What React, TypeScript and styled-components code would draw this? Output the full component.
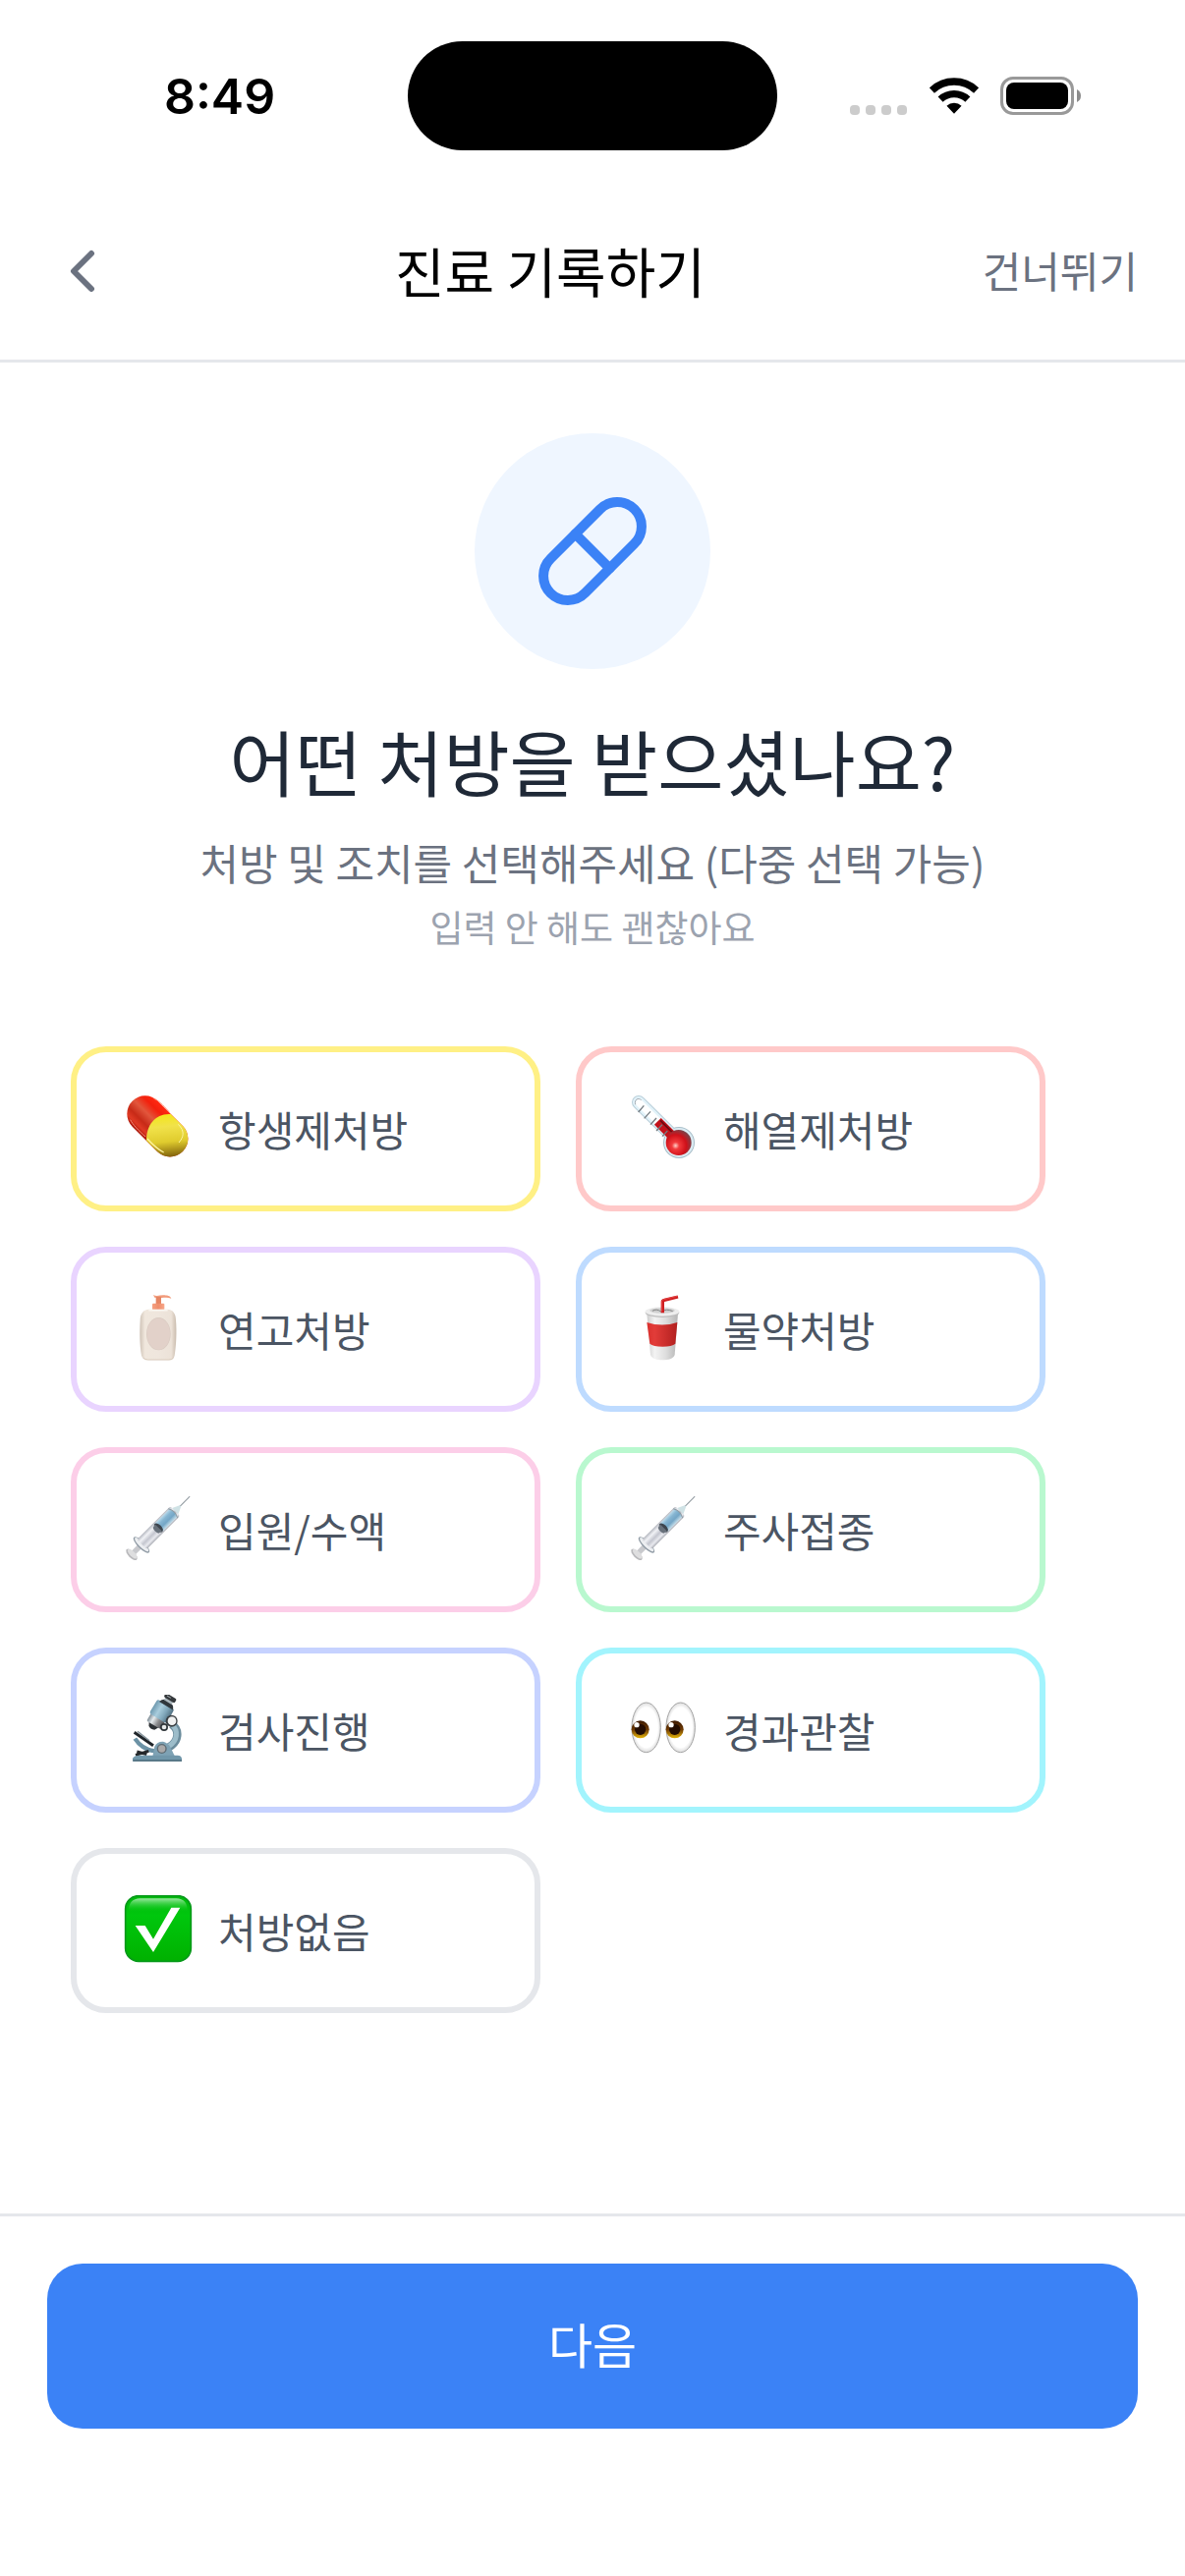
import React, { useState } from "react";
import styled, { createGlobalStyle } from "styled-components";
import { ChevronLeft, Pill } from "lucide-react";

const GlobalStyle = createGlobalStyle`
  *, *::before, *::after { box-sizing: border-box; }
  body {
    margin: 0;
    background: #ffffff;
    font-family: "Noto Sans CJK KR", "Noto Sans", sans-serif;
  }
  button { font-family: inherit; cursor: pointer; }
`;

const Screen = styled.div`
  min-height: 100vh;
  display: flex;
  flex-direction: column;
`;

const StatusBar = styled.div`
  display: flex;
  align-items: center;
  padding: 42px 32px 33px;
`;

const StatusSide = styled.div`
  flex: 1;
  display: flex;
  align-items: center;
  justify-content: center;
`;

const Clock = styled.time`
  font-family: Inter, sans-serif;
  font-size: 50px;
  font-weight: 600;
  line-height: 60px;
`;

const Island = styled.div`
  width: 376px;
  height: 111px;
  border-radius: 56px;
  background: #000000;
`;

const SignalDots = styled.svg`
  width: 58px;
  height: 38px;
  margin-right: 23px;
`;

const Wifi = styled.svg`
  width: 50px;
  height: 37px;
  margin-right: 22px;
`;

const Battery = styled.svg`
  width: 82px;
  height: 39px;
`;

const Header = styled.header`
  display: flex;
  align-items: center;
  justify-content: space-between;
  padding: 54px 48px;
  border-bottom: 3px solid #e5e7eb;
`;

const BackButton = styled.button`
  display: flex;
  padding: 0;
  border: 0;
  background: none;
  color: #6b7280;
`;

const SkipButton = styled.button`
  padding: 0 0 4px;
  border: 0;
  background: none;
  color: #6b7280;
  font-size: 43px;
  line-height: 60px;
`;

const Title = styled.h1`
  margin: 0;
  padding-bottom: 4px;
  font-size: 55px;
  font-weight: 400;
  line-height: 68px;
  color: #000000;
`;

const Main = styled.main`
  flex: 1;
  padding: 72px;
`;

const Intro = styled.section`
  display: flex;
  flex-direction: column;
  align-items: center;
  text-align: center;
  margin-bottom: 98px;
`;

const IconCircle = styled.div`
  width: 240px;
  height: 240px;
  border-radius: 50%;
  background: #eff6ff;
  color: #3b82f6;
  display: flex;
  align-items: center;
  justify-content: center;
  margin-bottom: 44px;
`;

const Question = styled.h2`
  margin: 0 0 26px;
  font-size: 73px;
  font-weight: 400;
  line-height: 96px;
  color: #1f2937;
`;

const Guide = styled.p`
  margin: 0 0 12px;
  font-size: 43px;
  line-height: 60px;
  color: #6b7280;
`;

const Hint = styled.p`
  margin: 0;
  font-size: 37px;
  line-height: 48px;
  color: #9ca3af;
`;

const Options = styled.div`
  display: flex;
  flex-wrap: wrap;
  gap: 36px;
`;

const OptionCard = styled.button<{ $border: string; $selected: boolean }>`
  width: 45%;
  height: 168px;
  display: flex;
  align-items: center;
  gap: 24px;
  padding: 0 48px;
  border: 6px solid ${(p) => p.$border};
  border-radius: 36px;
  background: ${(p) => (p.$selected ? p.$border : "#ffffff")};
  color: #4b5563;
  font-size: 42px;
  line-height: 60px;
`;

const Emoji = styled.svg`
  width: 72px;
  height: 72px;
  flex: none;
`;

const Footer = styled.footer`
  padding: 48px 48px 150px;
  border-top: 3px solid #e5e7eb;
`;

const NextButton = styled.button`
  width: 100%;
  height: 168px;
  padding: 0 0 6px;
  border: 0;
  border-radius: 36px;
  background: #3b82f6;
  color: #ffffff;
  font-size: 49px;
  line-height: 72px;
`;

const PillArt = () => (
  <>
    <defs>
      <linearGradient id="pillRed" gradientUnits="userSpaceOnUse" x1="26" y1="101" x2="104" y2="23">
        <stop offset="0" stopColor="#a81206" />
        <stop offset="0.14" stopColor="#e03a24" />
        <stop offset="0.3" stopColor="#c72a17" />
        <stop offset="0.55" stopColor="#e2563c" />
        <stop offset="0.8" stopColor="#f3200c" />
        <stop offset="1" stopColor="#ff2a12" />
      </linearGradient>
      <linearGradient id="pillYellow" gradientUnits="userSpaceOnUse" x1="128" y1="60" x2="142" y2="194">
        <stop offset="0" stopColor="#f3e716" />
        <stop offset="0.3" stopColor="#f1e24a" />
        <stop offset="0.65" stopColor="#e0cc2e" />
        <stop offset="1" stopColor="#80610b" />
      </linearGradient>
    </defs>
    <path d="M104 23L180 99A55 55 0 0 1 102 177L26 101A55 55 0 0 1 104 23Z" fill="url(#pillRed)" />
    <path d="M143 63L180 99A55 55 0 0 1 102 177L69 144C68 98 96 60 143 63Z" fill="url(#pillYellow)" />
    <path d="M20 80C26 94 46 114 66 132" fill="none" stroke="#f58d7a" strokeWidth="3" />
    <path d="M72 138C88 156 106 172 122 180" fill="none" stroke="#fff3a0" strokeWidth="4" />
    <path d="M166 94C188 116 182 134 168 150" fill="none" stroke="#fbf4a0" strokeWidth="3" />
    <path d="M92 16C104 20 116 32 138 56" fill="none" stroke="#ff8a70" strokeWidth="3" />
  </>
);

const ThermometerArt = () => (
  <>
    <defs>
      <radialGradient id="thermoBall" cx="0.38" cy="0.62" r="0.65">
        <stop offset="0" stopColor="#ffd0c8" />
        <stop offset="0.22" stopColor="#f23a3c" />
        <stop offset="0.65" stopColor="#cf1019" />
        <stop offset="1" stopColor="#7c4148" />
      </radialGradient>
    </defs>
    <path d="M30 27L140 136" stroke="#b9cfda" strokeWidth="42" strokeLinecap="round" />
    <circle cx="153" cy="150" r="48" fill="#a9bfca" />
    <path d="M30 27L140 136" stroke="#e3f3fa" strokeWidth="36" strokeLinecap="round" />
    <circle cx="153" cy="150" r="45" fill="#dcecf3" />
    <path d="M32 29L130 126" stroke="#ffffff" strokeWidth="22" strokeLinecap="round" />
    <path d="M20 34C16 18 28 12 38 20" fill="none" stroke="#a7aeb4" strokeWidth="3" />
    <path d="M88 85L135 132" stroke="#c3121b" strokeWidth="29" />
    <path d="M96 82L138 124" stroke="#6f0b10" strokeWidth="6" />
    <circle cx="152" cy="150" r="39" fill="url(#thermoBall)" />
    <path d="M46 37L29 57M66 55L47 76M84 75L66 95M102 95L84 114M118 114L102 131" stroke="#747b80" strokeWidth="4" />
  </>
);

const LotionArt = () => (
  <>
    <defs>
      <linearGradient id="lotionBody" x1="0" x2="1" y1="0" y2="0">
        <stop offset="0" stopColor="#cfc3b7" />
        <stop offset="0.14" stopColor="#f0e7dd" />
        <stop offset="0.5" stopColor="#efe6dd" />
        <stop offset="0.86" stopColor="#ece2d8" />
        <stop offset="1" stopColor="#cabcae" />
      </linearGradient>
      <linearGradient id="lotionPump" x1="0" x2="1" y1="0" y2="0">
        <stop offset="0" stopColor="#f5a081" />
        <stop offset="0.5" stopColor="#ef8d6b" />
        <stop offset="1" stopColor="#f7a88b" />
      </linearGradient>
    </defs>
    <path d="M90 3C98 8 108 5 120 4C132 4 142 6 145 14C136 10 126 11 116 12L94 11Z" fill="#f29b7b" />
    <rect x="98" y="9" width="16" height="24" fill="#e58563" />
    <rect x="87" y="29" width="37" height="20" rx="3" fill="url(#lotionPump)" />
    <path d="M76 47H134C150 48 159 60 159 80C162 116 160 156 155 188Q152 202 139 202H71Q58 202 54 188C48 156 48 116 50 80C50 60 60 48 76 47Z" fill="url(#lotionBody)" />
    <path d="M76 50H134" stroke="#faf6f0" strokeWidth="5" />
    <path d="M60 195Q64 201 74 201H138Q148 201 152 194" fill="none" stroke="#d8cabb" strokeWidth="3" />
    <ellipse cx="106" cy="122" rx="37" ry="50" fill="#d9cbc2" />
    <ellipse cx="106" cy="122" rx="35" ry="48" fill="#e2d1c9" />
  </>
);

const CupArt = () => (
  <>
    <defs>
      <linearGradient id="cupWhite" x1="0" x2="1" y1="0" y2="0">
        <stop offset="0" stopColor="#cdcdcd" />
        <stop offset="0.25" stopColor="#f3f3f3" />
        <stop offset="0.6" stopColor="#dedede" />
        <stop offset="1" stopColor="#b5b5b5" />
      </linearGradient>
      <linearGradient id="cupRed" x1="0" x2="1" y1="0" y2="0">
        <stop offset="0" stopColor="#d9302d" />
        <stop offset="0.25" stopColor="#e23c39" />
        <stop offset="1" stopColor="#b2201f" />
      </linearGradient>
    </defs>
    <path d="M55 60L66 186C70 198 86 202 103 202C120 202 136 198 140 186L150 60Z" fill="url(#cupWhite)" />
    <path d="M55 87Q102 102 148 87L142 152Q132 161 103 161Q74 161 64 152Z" fill="url(#cupRed)" />
    <ellipse cx="102" cy="57" rx="52" ry="15" fill="#bdbdbd" />
    <ellipse cx="102" cy="54" rx="52" ry="14" fill="#eeeeee" />
    <ellipse cx="102" cy="51" rx="38" ry="8" fill="#cfcfcf" />
    <path d="M72 52Q84 44 98 54Q116 44 134 53" fill="none" stroke="#858585" strokeWidth="3" />
    <path d="M103 58V24Q103 20 108 19L150 9" fill="none" stroke="#cf1d1f" strokeWidth="10" />
    <path d="M101 54V22Q102 18 107 17L148 7" fill="none" stroke="#ef5a5a" strokeWidth="2" />
  </>
);

const SyringeArt = () => (
  <>
    <defs>
      <linearGradient id="syringeGlass" x1="0" x2="0" y1="0" y2="1">
        <stop offset="0" stopColor="#b5b8c0" />
        <stop offset="0.25" stopColor="#f1f2f6" />
        <stop offset="0.55" stopColor="#c4c6cf" />
        <stop offset="0.8" stopColor="#e9eaef" />
        <stop offset="1" stopColor="#a9acb4" />
      </linearGradient>
      <linearGradient id="syringeLiquid" x1="0" x2="0" y1="0" y2="1">
        <stop offset="0" stopColor="#b9d9ea" />
        <stop offset="0.3" stopColor="#86b5d2" />
        <stop offset="0.65" stopColor="#74a6c6" />
        <stop offset="1" stopColor="#c5deea" />
      </linearGradient>
    </defs>
    <g transform="translate(24 184) rotate(-45)">
      <path d="M207 0H251" stroke="#8e979e" strokeWidth="3" />
      <path d="M184 -15L210 -3V3L184 15Z" fill="#cfe2e5" />
      <rect x="2" y="-8" width="44" height="16" fill="#c8c9cd" />
      <ellipse cx="0" cy="0" rx="10" ry="22" fill="#b9b9bc" />
      <ellipse cx="3" cy="0" rx="8" ry="19" fill="#dededf" />
      <ellipse cx="42" cy="0" rx="11" ry="33" fill="#8f9aa4" />
      <ellipse cx="43" cy="0" rx="8" ry="29" fill="#eceef1" />
      <rect x="44" y="-21" width="144" height="42" rx="7" fill="url(#syringeGlass)" />
      <path d="M118 -17H181Q186 0 181 17H118Z" fill="url(#syringeLiquid)" />
      <ellipse cx="116" cy="0" rx="9" ry="17" fill="#3d454e" />
      <path d="M104 -12Q98 0 104 12L116 15V-15Z" fill="#68717b" />
      <path d="M178 -20Q190 0 178 20" fill="none" stroke="#8c9ba3" strokeWidth="3" />
    </g>
  </>
);

const MicroscopeArt = () => (
  <>
    <defs>
      <linearGradient id="scopeTube" x1="0" x2="1" y1="0" y2="0">
        <stop offset="0" stopColor="#6f9ab0" />
        <stop offset="0.35" stopColor="#a9cddd" />
        <stop offset="0.7" stopColor="#7fa6b9" />
        <stop offset="1" stopColor="#527182" />
      </linearGradient>
      <linearGradient id="scopeSteel" x1="0" x2="1" y1="0" y2="0">
        <stop offset="0" stopColor="#7f8d96" />
        <stop offset="0.3" stopColor="#e6ebee" />
        <stop offset="0.65" stopColor="#8a8a8c" />
        <stop offset="1" stopColor="#54565a" />
      </linearGradient>
    </defs>
    <path d="M146 90C172 108 168 142 138 160" fill="none" stroke="#6b8c9c" strokeWidth="25" />
    <path d="M147 91C168 110 164 140 138 157" fill="none" stroke="#9dbdca" strokeWidth="15" />
    <path d="M34 134Q56 168 96 172" fill="none" stroke="#6c92a5" strokeWidth="13" />
    <path d="M32 115L90 155" stroke="#20252a" strokeWidth="9" />
    <path d="M42 112L78 140" stroke="#7b8b94" strokeWidth="4" />
    <path d="M36 184L76 172M40 174L70 182" stroke="#25282b" strokeWidth="9" />
    <path d="M88 188L94 158Q102 142 120 143Q134 146 142 160L156 188Z" fill="#7ea2b4" />
    <path d="M27 194Q32 185 48 185H164Q177 186 177 196V203H27Z" fill="#7197aa" />
    <path d="M28 201H177" stroke="#4d6b7a" strokeWidth="4" />
    <circle cx="116" cy="165" r="15" fill="#5e6b73" />
    <circle cx="116" cy="165" r="11" fill="#aaa9a9" />
    <g transform="translate(141 13) rotate(31)">
      <path d="M-19 92H15L8 105Q-4 111 -13 104Z" fill="#2c3034" />
      <rect x="-27" y="66" width="50" height="28" rx="5" fill="url(#scopeSteel)" />
      <rect x="-32" y="20" width="60" height="50" rx="7" fill="url(#scopeTube)" />
      <path d="M-24 24Q-19 7 0 7Q20 9 25 24Z" fill="#30373c" />
      <rect x="-14" y="0" width="27" height="12" fill="#aab6bc" />
      <rect x="-20" y="-10" width="38" height="14" rx="5" fill="#34383b" />
      <path d="M-13 -4H1" stroke="#9ba3a7" strokeWidth="3" />
    </g>
    <circle cx="146" cy="80" r="18" fill="#383d40" />
    <circle cx="147" cy="80" r="13" fill="#f0f1f1" />
    <circle cx="123" cy="99" r="12" fill="#30363a" />
    <circle cx="123" cy="99" r="7" fill="#e7e9e9" />
  </>
);

const EyesArt = () => (
  <>
    <defs>
      <linearGradient id="eyeIris" x1="0" x2="0" y1="0" y2="1">
        <stop offset="0" stopColor="#3d1a03" />
        <stop offset="0.5" stopColor="#6e3a03" />
        <stop offset="1" stopColor="#e8b70a" />
      </linearGradient>
      <radialGradient id="eyeWhite">
        <stop offset="0.8" stopColor="#ffffff" />
        <stop offset="1" stopColor="#dcdcdc" />
      </radialGradient>
    </defs>
    {[53, 158].map((x) => (
      <g key={x}>
        <ellipse cx={x} cy="100" rx="44" ry="76" fill="url(#eyeWhite)" stroke="#a5a5a5" strokeWidth="3" />
        <circle cx={x - 18} cy="106" r="27" fill="url(#eyeIris)" />
        <circle cx={x - 18} cy="106" r="17" fill="#240d02" />
        <circle cx={x - 29} cy="92" r="8" fill="#ffffff" />
      </g>
    ))}
  </>
);

const CheckArt = () => (
  <>
    <defs>
      <linearGradient id="checkGreen" x1="0" x2="0" y1="0" y2="1">
        <stop offset="0" stopColor="#00b80c" />
        <stop offset="0.3" stopColor="#00c70d" />
        <stop offset="1" stopColor="#00b100" />
      </linearGradient>
      <linearGradient id="checkShine" x1="0" x2="0" y1="0" y2="1">
        <stop offset="0" stopColor="#9ce8a2" />
        <stop offset="1" stopColor="#00c70d" stopOpacity="0" />
      </linearGradient>
    </defs>
    <rect x="5" y="2" width="200" height="200" rx="40" fill="url(#checkGreen)" stroke="#07991a" strokeWidth="5" />
    <path d="M14 52Q14 10 50 10H160Q195 10 195 52Z" fill="url(#checkShine)" />
    <path d="M35 93H65L90 134L145 38H172L90 174Z" fill="#ffffff" />
  </>
);

const OPTIONS = [
  { label: "항생제처방", border: "#fff085", Art: PillArt },
  { label: "해열제처방", border: "#ffc9c9", Art: ThermometerArt },
  { label: "연고처방", border: "#e9d4ff", Art: LotionArt },
  { label: "물약처방", border: "#bedbff", Art: CupArt },
  { label: "입원/수액", border: "#fccee8", Art: SyringeArt },
  { label: "주사접종", border: "#b9f8cf", Art: SyringeArt },
  { label: "검사진행", border: "#c6d2ff", Art: MicroscopeArt },
  { label: "경과관찰", border: "#a2f4fd", Art: EyesArt },
  { label: "처방없음", border: "#e5e7eb", Art: CheckArt },
];

export default function App() {
  const [selected, setSelected] = useState<string[]>([]);
  const toggle = (label: string) =>
    setSelected((now) => (now.includes(label) ? now.filter((l) => l !== label) : [...now, label]));

  return (
    <Screen>
      <GlobalStyle />
      <StatusBar>
        <StatusSide>
          <Clock>8:49</Clock>
        </StatusSide>
        <Island />
        <StatusSide>
          <SignalDots viewBox="0 0 58 38" aria-hidden="true">
            {[0, 16, 32, 48].map((x) => (
              <rect key={x} x={x} y="28" width="10" height="10" rx="4" fill="#cccccc" />
            ))}
          </SignalDots>
          <Wifi viewBox="0 0 150 111" aria-hidden="true">
            <g fill="none" stroke="#000000" strokeWidth="22">
              <path d="M7.2 39.1A98.5 98.5 0 0 1 142.8 39.1" />
              <path d="M33.4 66.6A60.5 60.5 0 0 1 116.6 66.6" />
            </g>
            <path d="M75 110.5L52.3 86.6A33 33 0 0 1 97.7 86.6Z" />
          </Wifi>
          <Battery viewBox="0 0 82 39" aria-hidden="true">
            <rect x="1.5" y="1.5" width="72" height="36" rx="11.5" fill="none" stroke="#999999" strokeWidth="3" />
            <rect x="6" y="6" width="63" height="27" rx="8" />
            <path d="M78 13Q82 15 82 19.5Q82 24 78 26Z" fill="#8c8c8c" />
          </Battery>
        </StatusSide>
      </StatusBar>

      <Header>
        <BackButton type="button" aria-label="뒤로">
          <ChevronLeft size={72} strokeWidth={2} />
        </BackButton>
        <Title>진료 기록하기</Title>
        <SkipButton type="button">건너뛰기</SkipButton>
      </Header>

      <Main>
        <Intro>
          <IconCircle>
            <Pill size={120} strokeWidth={2} />
          </IconCircle>
          <Question>어떤 처방을 받으셨나요?</Question>
          <Guide>처방 및 조치를 선택해주세요 (다중 선택 가능)</Guide>
          <Hint>입력 안 해도 괜찮아요</Hint>
        </Intro>
        <Options>
          {OPTIONS.map(({ label, border, Art }) => (
            <OptionCard
              key={label}
              type="button"
              $border={border}
              $selected={selected.includes(label)}
              aria-pressed={selected.includes(label)}
              onClick={() => toggle(label)}
            >
              <Emoji viewBox="0 0 216 216" aria-hidden="true">
                <Art />
              </Emoji>
              {label}
            </OptionCard>
          ))}
        </Options>
      </Main>

      <Footer>
        <NextButton type="button">다음</NextButton>
      </Footer>
    </Screen>
  );
}
